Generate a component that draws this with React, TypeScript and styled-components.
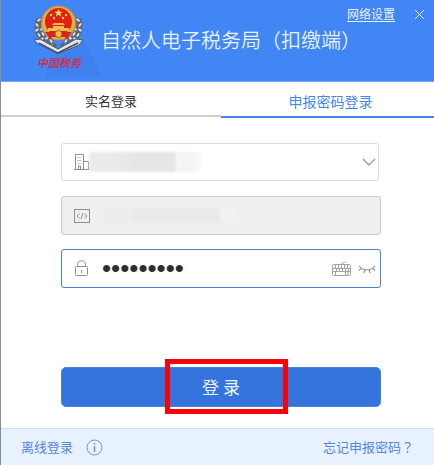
import React, { useState } from "react";
import styled, { createGlobalStyle } from "styled-components";

const BLUE = "#4285f4";
const LINE = "#8f8f8f";

const GlobalStyle = createGlobalStyle`
  * { box-sizing: border-box; }
  body {
    margin: 0;
    background: #fff;
    font-family: "Noto Sans CJK SC", sans-serif;
    font-size: 13px;
    line-height: 18px;
  }
  button, input, select { font: inherit; margin: 0; }
`;

const Window = styled.main`
  display: flex;
  flex-direction: column;
  min-height: 100vh;
  border-left: 1px solid #8c8c8c;
  background: #fff;
`;

const Header = styled.header`
  position: relative;
  display: flex;
  align-items: flex-start;
  height: 82px;
  padding-left: 31px;
  background: ${BLUE};
  border-bottom: 1px solid #76a5f2;
`;

const Emblem = styled.svg`
  flex: none;
  width: 72px;
  height: 81px;
`;

const Title = styled.h1`
  margin: 26px 0 0 -3px;
  color: #e6f3ff;
  font-size: 20px;
  font-weight: 350;
  line-height: 28px;
  white-space: nowrap;
`;

const WindowActions = styled.div`
  position: absolute;
  top: 5px;
  right: 8px;
  display: flex;
  align-items: center;
  gap: 18px;
`;

const SettingsLink = styled.a`
  color: #e6f3ff;
  font-size: 12px;
  text-decoration: underline;
  text-underline-offset: 2px;
`;

const IconButton = styled.button`
  display: flex;
  flex: none;
  padding: 0;
  border: 0;
  background: none;
  color: ${LINE};
`;

const Tabs = styled.div`
  display: grid;
  grid-template-columns: 220fr 213fr;
  align-items: start;
`;

const Tab = styled.button<{ $active?: boolean }>`
  height: ${(p) => (p.$active ? 36 : 35)}px;
  padding: ${(p) => (p.$active ? "4px 0 0 6px" : "4px 0 0")};
  border: 0;
  border-bottom: 2px solid ${(p) => (p.$active ? "#4586e6" : "#cfcfd2")};
  background: #fff;
  color: ${(p) => (p.$active ? "#4586e6" : "#333")};
  font-size: ${(p) => (p.$active ? 14 : 13)}px;
`;

const Form = styled.form`
  display: flex;
  flex: 1;
  flex-direction: column;
  padding: 25px 53px 21px 60px;
`;

const Field = styled.div<{ $tone?: "disabled" | "focus" }>`
  position: relative;
  display: flex;
  align-items: center;
  height: 39px;
  margin-bottom: 14px;
  padding: 0 4px 0 11px;
  border: 1px solid ${(p) => (p.$tone === "focus" ? "#4a7fcb" : "#cbcbce")};
  border-radius: 3px;
  background: ${(p) => (p.$tone === "disabled" ? "#eeeff1" : "#fff")};
`;

const CompanyField = styled(Field)`
  height: 38px;
  margin: 0 2px 15px 0;
  padding-right: 2px;
  border-color: #dcdce0;
`;

const FieldIcon = styled.svg`
  flex: none;
  width: 18px;
  height: 18px;
  fill: none;
  stroke: ${LINE};
`;

const Select = styled.select`
  flex: 1;
  min-width: 0;
  height: 100%;
  border: 0;
  outline: 0;
  appearance: none;
  background: none;
`;

const Input = styled.input`
  flex: 1;
  min-width: 0;
  height: 100%;
  padding: 0 0 0 11px;
  border: 0;
  outline: 0;
  background: none;
  color: #302d2d;
  font-family: "Liberation Sans", sans-serif;
  font-size: 26px;
`;

const Tools = styled.div`
  display: flex;
  align-items: center;
  gap: 6px;
`;

const Smudge = styled.div`
  position: absolute;
  top: 8px;
  left: 27px;
  width: 112px;
  height: 20px;
  border-radius: 3px;
  background: linear-gradient(90deg, #ececec 0, #e9e9e9 40px, #e6e6e6 41px 86px, #f5f5f5 87px 104px, #fafafa);
  filter: blur(1px);
`;

const FaintSmudge = styled(Smudge)`
  top: 11px;
  left: 35px;
  width: 142px;
  height: 14px;
  background: linear-gradient(90deg, #ededee 0 36px, #e9e9ea 37px 122px, #f1f1f2 124px);
`;

const Submit = styled.div`
  position: relative;
  margin-top: auto;
`;

const SubmitButton = styled.button`
  display: block;
  width: 100%;
  height: 40px;
  padding: 0;
  border: 1px solid #4c82cf;
  border-radius: 5px;
  background: #3574dc;
  color: #f0f6ff;
  font-size: 17px;
`;

const Highlight = styled.div`
  position: absolute;
  top: -8px;
  left: calc(50% - 56px);
  width: 123px;
  height: 55px;
  border: 5px solid #fb0007;
  pointer-events: none;
`;

const Footer = styled.footer`
  display: flex;
  align-items: center;
  justify-content: space-between;
  height: 37px;
  padding: 0 20px;
  border-top: 1px solid #cbdff0;
  background: #e7f2fe;
`;

const FooterGroup = styled.div`
  display: flex;
  align-items: center;
  gap: 13px;
`;

const FooterLink = styled.a`
  color: #5585dd;
  text-decoration: none;
`;

const CenteredMark = styled.span`
  font-family: "Noto Sans CJK TC", sans-serif;
`;

function TaxEmblem() {
  const leaves = [
    [7, 20], [5, 25], [5, 30], [7, 35], [10, 39], [14, 43], [19, 46],
    [11, 24], [10, 29], [11, 34], [15, 38], [19, 41],
  ];
  return (
    <Emblem viewBox="0 0 72 81" role="img" aria-label="中国税务">
      <path d="M52 40 70 77H14V68Z" fill="#3e80ee" />
      {[false, true].map((flip) => (
        <g key={String(flip)} transform={flip ? "translate(53 0) scale(-1 1)" : undefined}>
          <path d="M7 19C3 31 8 42 24 47" fill="none" stroke="#5d6772" strokeWidth="6" />
          {leaves.map(([x, y], i) => (
            <ellipse
              key={i}
              cx={x}
              cy={y}
              rx="2.6"
              ry="1.4"
              transform={`rotate(${i % 2 ? 55 : -35} ${x} ${y})`}
              fill="#e4e3df"
              stroke="#4c555f"
              strokeWidth=".6"
            />
          ))}
        </g>
      ))}
      <path d="M2 40 8 39 26 49 44 39 51 40 47 45 26 54 5 43Z" fill="#dfe3e8" stroke="#45566d" />
      <path d="m7 43 19 10 20-10" fill="none" stroke="#39465b" strokeWidth="1.4" />
      <circle cx="26.500" cy="23" r="17" fill="#e6ae43" stroke="#c98d3c" />
      <circle cx="26.500" cy="21.500" r="13.500" fill="#df2218" />
      <path d="m26.500 9 1.100 2.800h3l-2.400 1.800.9 2.900-2.600-1.700-2.600 1.700.9-2.900-2.400-1.800h3Z" fill="#ffe65a" />
      {[[19, 15], [22, 18], [31, 18], [34, 15]].map(([x, y]) => (
        <circle key={x} cx={x} cy={y} r="1.200" fill="#ffd451" />
      ))}
      <path d="M22 23h9l2 2H20Zm-1 3h11v2H21Zm-5 2h21v3H16Z" fill="#f1bd4b" />
      <path d="M13 32h27l-4 5H17Z" fill="#d82318" />
      <circle cx="26.500" cy="34" r="3.500" fill="#efbc4b" stroke="#a95323" />
      <path d="M18 34v5m17-5v5" stroke="#d82318" strokeWidth="3" />
      <text
        x="5"
        y="67"
        fill="#dc263b"
        fontFamily="Noto Sans CJK SC, sans-serif"
        fontSize="11"
        fontStyle="italic"
        fontWeight="500"
      >
        中国税务
      </text>
    </Emblem>
  );
}

function Keyboard() {
  return (
    <svg width="20" height="16" viewBox="0 0 20 16" fill="none" stroke="#a3a3a3">
      <rect x=".5" y="3.500" width="18" height="11" rx="1" />
      <path d="M1 7.500h17M1 10.500h17M3.500 4v3m3-3v3m3-3v3m3-3v3m3-3v3M4.500 8v2m3-2v2m3-2v2m3-2v2m3-2v2M3.500 11v3m10-3v3m2.500-3v3M9.500 3l3-2 1 1" />
    </svg>
  );
}

function ClosedEye() {
  return (
    <svg width="18" height="10" viewBox="0 0 18 10" fill="none" stroke="#939393" strokeWidth="1.200">
      <path d="M1 2c4 5 12 5 16 0M3.500 4 1 6.500M7 5.500 6 9m5-3.500L12 9m2.500-5L17 6.500" />
    </svg>
  );
}

export default function App() {
  const [password, setPassword] = useState("123456789");
  return (
    <>
      <GlobalStyle />
      <Window>
        <Header>
          <TaxEmblem />
          <Title>自然人电子税务局（扣缴端）</Title>
          <WindowActions>
            <SettingsLink href="#settings">网络设置</SettingsLink>
            <IconButton type="button" aria-label="关闭">
              <svg width="13" height="13" viewBox="0 0 13 13" stroke="#e8f1ff" fill="none">
                <path d="m2 2 9 9m0-9-9 9" />
              </svg>
            </IconButton>
          </WindowActions>
        </Header>
        <Tabs role="tablist">
          <Tab type="button" role="tab" aria-selected="false">实名登录</Tab>
          <Tab type="button" role="tab" aria-selected="true" $active>申报密码登录</Tab>
        </Tabs>
        <Form onSubmit={(e) => e.preventDefault()}>
          <CompanyField>
            <FieldIcon viewBox="0 0 18 18">
              <path d="M1 16.500h16M2.500 16V1.500h8V16M10.500 8.500h5V16" />
              <path d="M4.500 4.500h4m-4 3h4m-4 3h4" strokeDasharray="1 1" />
              <path d="M5.500 16v-3h2v3" />
            </FieldIcon>
            <Select aria-label="企业名称" defaultValue="">
              <option value="" />
            </Select>
            <svg width="14" height="9" viewBox="0 0 14 9" fill="none" stroke="#8f8f8f" strokeWidth="1.200">
              <path d="m1 1 6 6 6-6" />
            </svg>
            <Smudge />
          </CompanyField>
          <Field $tone="disabled">
            <FieldIcon viewBox="0 0 18 18">
              <rect x="1.500" y="2.500" width="15" height="13" />
              <path d="M6.500 6.500 4 9l2.500 2.500m5-5L14 9l-2.500 2.500M10 6l-2 6" />
            </FieldIcon>
            <Input aria-label="纳税人识别号" disabled />
            <FaintSmudge />
          </Field>
          <Field $tone="focus">
            <FieldIcon viewBox="0 0 18 18">
              <rect x="2.500" y="6.500" width="12" height="9" rx="1" />
              <path d="M4.500 6V4.500c0-5 8-5 8 0V6M8.500 10v3" />
            </FieldIcon>
            <Input
              type="password"
              aria-label="申报密码"
              value={password}
              onChange={(e) => setPassword(e.target.value)}
            />
            <Tools>
              <IconButton type="button" aria-label="软键盘"><Keyboard /></IconButton>
              <IconButton type="button" aria-label="显示密码"><ClosedEye /></IconButton>
            </Tools>
          </Field>
          <Submit>
            <SubmitButton type="submit">登 录</SubmitButton>
            <Highlight />
          </Submit>
        </Form>
        <Footer>
          <FooterGroup>
            <FooterLink href="#offline">离线登录</FooterLink>
            <IconButton type="button" aria-label="说明">
              <svg width="17" height="17" viewBox="0 0 17 17" fill="none" stroke="#6695e5">
                <circle cx="8.500" cy="8.500" r="7.500" />
                <path d="M8.500 4v1.500m0 1.500v6" strokeWidth="1.500" />
              </svg>
            </IconButton>
          </FooterGroup>
          <FooterLink href="#forgot">忘记申报密码<CenteredMark>？</CenteredMark></FooterLink>
        </Footer>
      </Window>
    </>
  );
}
